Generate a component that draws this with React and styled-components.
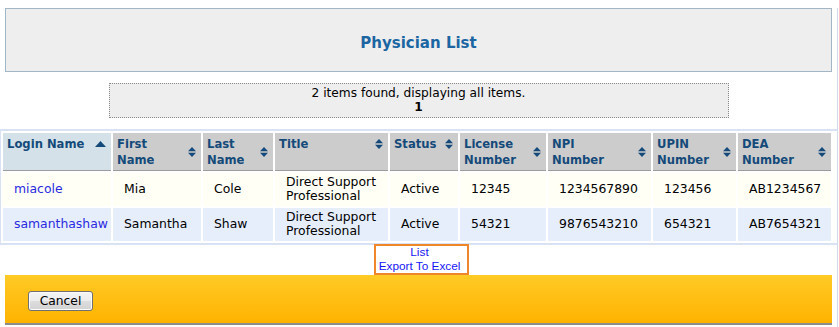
import React from "react";
import styled, { createGlobalStyle } from "styled-components";

const Global = createGlobalStyle`
  html, body { margin: 0; padding: 0; background: #fff; }
  body { font-family: "DejaVu Sans", Verdana, sans-serif; color: #000; }
`;

const Page = styled.div`
  width: 837px;
  min-height: 100vh;
  border-right: 1px solid #d3dcea;
`;

const TitleBox = styled.div`
  margin: 8px 5px 0 5px;
  height: 62px;
  background: #eeeeee;
  border: 1px solid #a2b6c6;
`;

const Title = styled.h1`
  margin: 0;
  padding-top: 25px;
  font-size: 15px;
  line-height: 18px;
  font-weight: bold;
  color: #1b66a2;
  text-align: center;
`;

const Pager = styled.div`
  width: 620px;
  box-sizing: border-box;
  margin: 11px auto 0;
  background: #eeeeee;
  border: 1px dotted #8a8a8a;
  padding: 2px 0 3px;
  text-align: center;
  font-size: 12.2px;
  line-height: 14px;
`;

const PageNum = styled.div`
  font-weight: bold;
`;

const TableFrame = styled.div`
  margin-top: 11px;
  border-left: 1px solid #d8e2f4;
  border-top: 2px solid #d8e2f4;
  border-bottom: 2px solid #d8e2f4;
`;

const Grid = styled.table`
  table-layout: fixed;
  width: 832px;
  border-collapse: separate;
  border-spacing: 2px;
`;

const HeadCell = styled.th`
  box-sizing: border-box;
  background: ${(p) => (p.$sorted ? "#d4e1e8" : "#cccccc")};
  border-bottom: 1px solid #9c9c9c;
  padding: 3px 5px 2px 4px;
  vertical-align: top;
  text-align: left;
  font-size: 11.6px;
  line-height: 16px;
  font-weight: bold;
  color: #144a7a;
`;

const HeadInner = styled.div`
  display: flex;
  align-items: center;
  justify-content: space-between;
  gap: 3px;
`;

const Row = styled.tr`
  background: ${(p) => (p.$alt ? "#e6eefc" : "#fffff5")};
`;

const Cell = styled.td`
  box-sizing: border-box;
  padding: 2px 8px 3px 11px;
  vertical-align: middle;
  font-size: 12.4px;
  line-height: 14px;
  height: 33px;
`;

const UserLink = styled.a`
  color: #2a2ae0;
  text-decoration: none;
`;

const ExportBar = styled.div`
  margin-top: -1px;
  text-align: center;
`;

const ExportBox = styled.div`
  display: inline-block;
  margin-left: 6px;
  border: 2px solid #f0862a;
  padding: 0 7px 0 3px;
  font-family: "Liberation Sans", Arial, sans-serif;
  font-size: 11.8px;
  line-height: 13.5px;
  text-align: center;
`;

const ExportLink = styled.a`
  display: block;
  color: #1616f5;
  text-decoration: none;
`;

const Footer = styled.div`
  margin: 0 5px;
  height: 33px;
  padding: 15px 0 0 23px;
  background: linear-gradient(#ffca26, #ffb300);
  border-bottom: 2px solid #8c8c8c;
`;

const CancelButton = styled.button`
  width: 65px;
  height: 20px;
  padding: 0;
  border: 1px solid #707070;
  border-radius: 3px;
  background: linear-gradient(#f4f4f4 0%, #ececec 50%, #dddddd 51%, #d2d2d2 100%);
  font-family: "DejaVu Sans", Verdana, sans-serif;
  font-size: 12.3px;
  color: #000;
  box-shadow: inset 0 0 0 1px #fbfbfb;
`;

const SortAsc = () => (
  <svg width="11" height="6" viewBox="0 0 11 6" style={{ flex: "none" }}>
    <polygon points="0,6 5.5,0 11,6" fill="#144a7a" />
  </svg>
);

const SortBoth = () => (
  <svg width="8" height="10" viewBox="0 0 8 10" style={{ flex: "none" }}>
    <polygon points="0,4.3 4,0 8,4.3" fill="#144a7a" />
    <polygon points="0,5.7 4,10 8,5.7" fill="#144a7a" />
  </svg>
);

const columns = [
  { key: "login", label: ["Login Name"], width: 108, sorted: true },
  { key: "first", label: ["First", "Name"], width: 88 },
  { key: "last", label: ["Last", "Name"], width: 70 },
  { key: "title", label: ["Title"], width: 113 },
  { key: "status", label: ["Status"], width: 68 },
  { key: "license", label: ["License", "Number"], width: 86 },
  { key: "npi", label: ["NPI", "Number"], width: 103 },
  { key: "upin", label: ["UPIN", "Number"], width: 83 },
  { key: "dea", label: ["DEA", "Number"], width: 93 },
];

const rows = [
  {
    login: "miacole",
    first: "Mia",
    last: "Cole",
    title: "Direct Support Professional",
    status: "Active",
    license: "12345",
    npi: "1234567890",
    upin: "123456",
    dea: "AB1234567",
  },
  {
    login: "samanthashaw",
    first: "Samantha",
    last: "Shaw",
    title: "Direct Support Professional",
    status: "Active",
    license: "54321",
    npi: "9876543210",
    upin: "654321",
    dea: "AB7654321",
  },
];

export default function App() {
  return (
    <Page>
      <Global />
      <TitleBox>
        <Title>Physician List</Title>
      </TitleBox>
      <Pager>
        <div>2 items found, displaying all items.</div>
        <PageNum>1</PageNum>
      </Pager>
      <TableFrame>
        <Grid>
          <colgroup>
            {columns.map((c) => (
              <col key={c.key} style={{ width: c.width }} />
            ))}
          </colgroup>
          <thead>
            <tr>
              {columns.map((c) => (
                <HeadCell key={c.key} $sorted={c.sorted}>
                  <HeadInner>
                    <span>
                      {c.label.map((l, i) => (
                        <React.Fragment key={i}>
                          {i > 0 && <br />}
                          {l}
                        </React.Fragment>
                      ))}
                    </span>
                    {c.sorted ? <SortAsc /> : <SortBoth />}
                  </HeadInner>
                </HeadCell>
              ))}
            </tr>
          </thead>
          <tbody>
            {rows.map((r, i) => (
              <Row key={r.login} $alt={i % 2 === 1}>
                <Cell>
                  <UserLink href="#">{r.login}</UserLink>
                </Cell>
                <Cell>{r.first}</Cell>
                <Cell>{r.last}</Cell>
                <Cell>{r.title}</Cell>
                <Cell>{r.status}</Cell>
                <Cell>{r.license}</Cell>
                <Cell>{r.npi}</Cell>
                <Cell>{r.upin}</Cell>
                <Cell>{r.dea}</Cell>
              </Row>
            ))}
          </tbody>
        </Grid>
      </TableFrame>
      <ExportBar>
        <ExportBox>
          <ExportLink href="#">List</ExportLink>
          <ExportLink href="#">Export To Excel</ExportLink>
        </ExportBox>
      </ExportBar>
      <Footer>
        <CancelButton>Cancel</CancelButton>
      </Footer>
    </Page>
  );
}
